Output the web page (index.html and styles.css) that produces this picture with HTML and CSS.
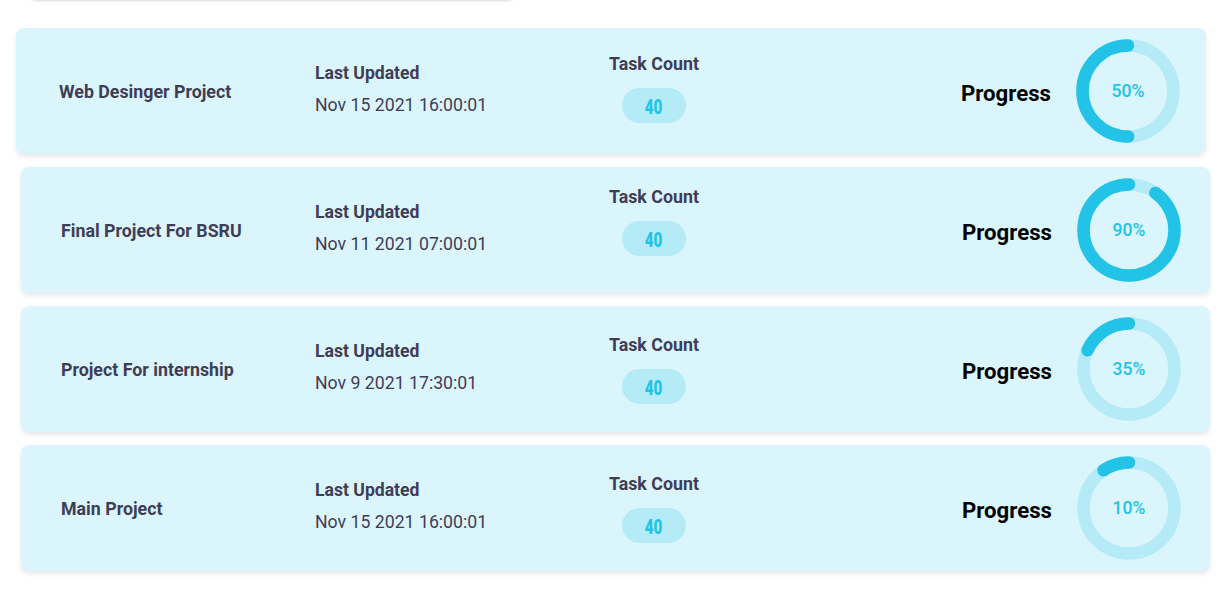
FILE: index.html
```html
<!DOCTYPE html>
<html lang="en">
<head>
<meta charset="utf-8">
<title>Projects</title>
<link rel="stylesheet" href="styles.css">
</head>
<body>
<div class="page">
  <div class="prev-card"></div>
  <div class="list">
    <div class="card card--first">
      <div class="name name--wide">Web Desinger Project</div>
      <div class="updated">
        <div class="label">Last Updated</div>
        <div class="date">Nov 15 2021 16:00:01</div>
      </div>
      <div class="tasks tasks--a">
        <div class="label">Task Count</div>
        <div class="pill"><span class="pill-num">40</span></div>
      </div>
      <div class="progress">
        <div class="progress-label">Progress</div>
        <div class="ring">
          <svg width="104" height="104" viewBox="0 0 104 104">
            <circle class="track" cx="52" cy="52" r="45.5"></circle>
            <g transform="translate(52 52) scale(-1 1) rotate(-90)">
              <circle class="bar" cx="0" cy="0" r="45.5" stroke-dasharray="142.9 400"></circle>
            </g>
          </svg>
          <span class="pct">50%</span>
        </div>
      </div>
    </div>

    <div class="card">
      <div class="name">Final Project For BSRU</div>
      <div class="updated">
        <div class="label">Last Updated</div>
        <div class="date">Nov 11 2021 07:00:01</div>
      </div>
      <div class="tasks tasks--b">
        <div class="label">Task Count</div>
        <div class="pill"><span class="pill-num">40</span></div>
      </div>
      <div class="progress">
        <div class="progress-label">Progress</div>
        <div class="ring">
          <svg width="104" height="104" viewBox="0 0 104 104">
            <circle class="track" cx="52" cy="52" r="45.5"></circle>
            <g transform="translate(52 52) scale(-1 1) rotate(-90)">
              <circle class="bar" cx="0" cy="0" r="45.5" stroke-dasharray="257.3 400"></circle>
            </g>
          </svg>
          <span class="pct">90%</span>
        </div>
      </div>
    </div>

    <div class="card">
      <div class="name">Project For internship</div>
      <div class="updated">
        <div class="label">Last Updated</div>
        <div class="date">Nov 9 2021 17:30:01</div>
      </div>
      <div class="tasks">
        <div class="label">Task Count</div>
        <div class="pill"><span class="pill-num">40</span></div>
      </div>
      <div class="progress">
        <div class="progress-label">Progress</div>
        <div class="ring">
          <svg width="104" height="104" viewBox="0 0 104 104">
            <circle class="track" cx="52" cy="52" r="45.5"></circle>
            <g transform="translate(52 52) scale(-1 1) rotate(-90)">
              <circle class="bar" cx="0" cy="0" r="45.5" stroke-dasharray="52 400"></circle>
            </g>
          </svg>
          <span class="pct">35%</span>
        </div>
      </div>
    </div>

    <div class="card">
      <div class="name">Main Project</div>
      <div class="updated">
        <div class="label">Last Updated</div>
        <div class="date">Nov 15 2021 16:00:01</div>
      </div>
      <div class="tasks">
        <div class="label">Task Count</div>
        <div class="pill"><span class="pill-num">40</span></div>
      </div>
      <div class="progress">
        <div class="progress-label">Progress</div>
        <div class="ring">
          <svg width="104" height="104" viewBox="0 0 104 104">
            <circle class="track" cx="52" cy="52" r="45.5"></circle>
            <g transform="translate(52 52) scale(-1 1) rotate(-90)">
              <circle class="bar" cx="0" cy="0" r="45.5" stroke-dasharray="27 400"></circle>
            </g>
          </svg>
          <span class="pct">10%</span>
        </div>
      </div>
    </div>
  </div>
</div>
</body>
</html>
```

FILE: styles.css
```css
* { box-sizing: border-box; }

html, body {
  margin: 0;
  padding: 0;
  background: #ffffff;
}

body {
  font-family: Roboto, "Liberation Sans", Arial, sans-serif;
  color: #3f3d56;
  width: 1228px;
  height: 609px;
  overflow: hidden;
}

.prev-card {
  width: 486px;
  height: 12px;
  margin: -12px 0 0 29px;
  background: #ffffff;
  border-radius: 0 0 8px 8px;
  box-shadow: 0 1px 3px rgba(0, 0, 0, 0.16);
}

.list {
  display: flex;
  flex-direction: column;
  gap: 13px;
  padding-top: 28px;
}

.card {
  display: flex;
  align-items: flex-start;
  height: 126px;
  margin: 0 18px 0 21px;
  padding: 0 29px 0 40px;
  background: #dbf5fc;
  border-radius: 8px;
  box-shadow: 0 3px 5px rgba(0, 0, 0, 0.09);
}

.card--first {
  margin: 0 22px 0 16px;
  padding: 0 26px 0 43px;
}

.name {
  width: 254px;
  align-self: center;
  margin-top: 2px;
  font-size: 17.8px;
  font-weight: 700;
  line-height: 20px;
  color: #3f3d56;
}

.name--wide { width: 256px; }

.updated {
  width: 294px;
  padding-top: 35px;
}

.label {
  font-size: 17.6px;
  font-weight: 700;
  line-height: 20px;
  color: #3f3d56;
}

.date {
  margin-top: 12px;
  font-size: 17.7px;
  font-weight: 400;
  line-height: 20px;
  color: #3f3d56;
}

.tasks {
  flex: 1;
  padding-top: 29px;
}

.tasks--a { padding-top: 26px; }
.tasks--b { padding-top: 20px; }

.tasks .label {
  font-size: 17.8px;
}

.pill {
  width: 64px;
  height: 35px;
  margin: 14px 0 0 13px;
  border-radius: 18px;
  background: #b5ebf7;
  display: flex;
  align-items: center;
  justify-content: center;
  padding-top: 2px;
}

.pill-num {
  display: inline-block;
  color: #22c3e6;
  font-weight: 900;
  font-size: 20px;
  line-height: 20px;
  transform: scaleX(0.76);
}

.progress {
  align-self: center;
  display: flex;
  align-items: center;
  gap: 25px;
}

.progress-label {
  margin-top: 4px;
  font-size: 22.2px;
  font-weight: 700;
  color: #000000;
}

.ring {
  position: relative;
  width: 104px;
  height: 104px;
}

.ring svg { display: block; }

.track {
  fill: none;
  stroke: #b5ebf7;
  stroke-width: 12.5;
}

.bar {
  fill: none;
  stroke: #22c3e6;
  stroke-width: 12.5;
  stroke-linecap: round;
}

.pct {
  position: absolute;
  inset: 0;
  display: flex;
  align-items: center;
  justify-content: center;
  font-size: 17.5px;
  font-weight: 500;
  color: #22c3e6;
}
```
